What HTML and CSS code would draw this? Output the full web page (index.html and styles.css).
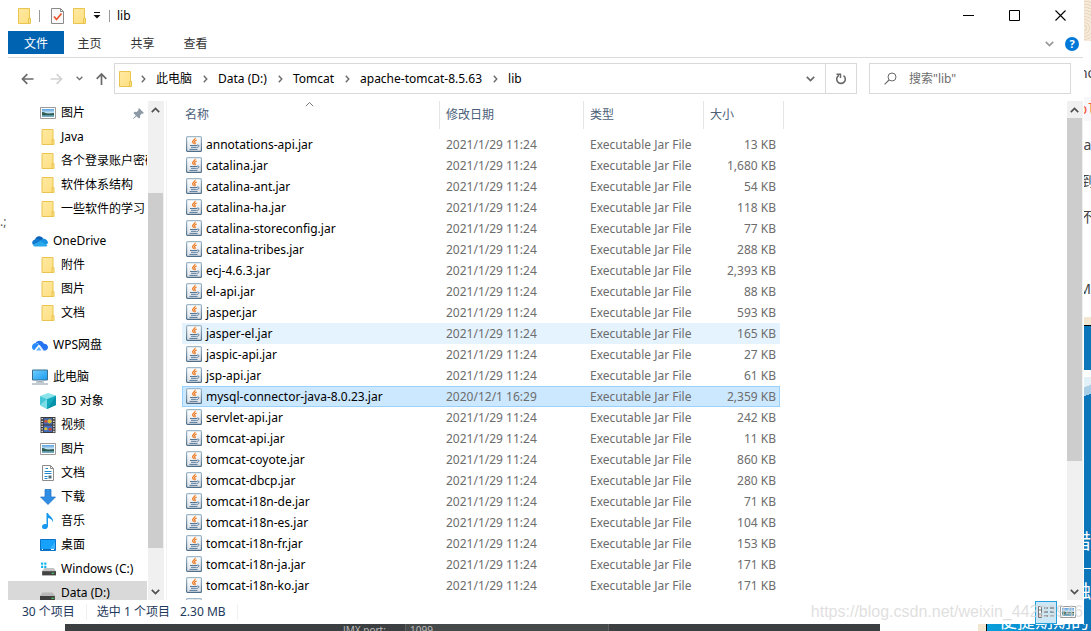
FILE: index.html
```html
<!DOCTYPE html>
<html lang="zh-CN">
<head>
<meta charset="utf-8">
<title>lib</title>
<link rel="stylesheet" href="styles.css">
</head>
<body>
<svg class="defs" aria-hidden="true">
  <defs>
    <linearGradient id="g-folder" x1="0" y1="0" x2="1" y2="1"><stop offset="0" stop-color="#ffe9a3"/><stop offset="1" stop-color="#ffdf80"/></linearGradient>
    <linearGradient id="g-jar" x1="0" y1="0" x2="0" y2="1"><stop offset="0" stop-color="#ffffff"/><stop offset="1" stop-color="#dde1e6"/></linearGradient>
    <linearGradient id="g-edge" x1="0" y1="0" x2="0" y2="1"><stop offset="0" stop-color="#9fb9cb"/><stop offset="1" stop-color="#4d6d88"/></linearGradient>
    <linearGradient id="g-sky" x1="0" y1="0" x2="0" y2="1"><stop offset="0" stop-color="#5aa0e0"/><stop offset=".5" stop-color="#cfe8f8"/><stop offset=".6" stop-color="#3b6e62"/><stop offset="1" stop-color="#7fb6d6"/></linearGradient>
    <linearGradient id="g-screen" x1="0" y1="0" x2="1" y2="1"><stop offset="0" stop-color="#6fd0ff"/><stop offset="1" stop-color="#1a9af0"/></linearGradient>
    <symbol id="folder" viewBox="0 0 13 16"><path d="M.5 .5h11v10h1v5H.5z" fill="url(#g-folder)" stroke="#e9c550"/><path d="M10.500 15V10.500h2" fill="none" stroke="#e9c550"/></symbol>
    <symbol id="jar" viewBox="0 0 16 16"><rect x=".6" y=".6" width="14.800" height="14.800" rx="1" fill="url(#g-jar)" stroke="url(#g-edge)" stroke-width="1.200"/><path d="M9 1.800c1 1.700-3.500 2.700-2.300 4.500.3.600.9 1 1.100 1.500M10.800 4c-2.500.8-2.700 1.700-1.900 2.500.6.700.2 1.200-.4 1.600" fill="none" stroke="#ee7f28" stroke-width="1.300"/><path d="M4 9.500h7M5 11.300h5.500M3.500 13.400h8M11 9.200c3-.8 2.500 2-.3 2.300" fill="none" stroke="#54799b" stroke-width="1"/></symbol>
    <symbol id="picture" viewBox="0 0 16 12"><path d="M.5.5h15v11H.5z" fill="#fff" stroke="#9b9b9b"/><path d="M2 2h12v8H2z" fill="url(#g-sky)"/><path d="M2 5c3 0 4 2 7 2l5-1v2H2z" fill="#2e5f56"/></symbol>
    <symbol id="cloud" viewBox="0 0 16 11"><path d="M3 4A4.500 4.500 0 0 1 11.500 3.500L8 7z" fill="#0a63b8"/><path d="M3.500 3.700A3.600 3.600 0 0 0 1 9.500L10 5.500C7 3 5 3.500 3.500 3.700z" fill="#1379cf"/><path d="M7 5.500 11 3.300c3 0 5 2 5 4.500L12 10z" fill="#1690e0"/><path d="M1 9.500 8.500 5.500l7 4C15 10.600 14 11 13 11H3.500C2.300 11 1.500 10.500 1 9.500z" fill="#28a8ea"/></symbol>
    <symbol id="wps" viewBox="0 0 16 11"><path d="M3 4a5 5 0 0 1 9 .2c2.500 0 4 1.600 4 3.500S14.500 11 13 11h-2L6 4z" fill="#2673f0"/><path d="M3.500 3.500C1 4 0 5.500 0 7.300 0 9 .8 10.300 2.200 10.800L7 5z" fill="#2b8cff"/><path d="M4 11 7 7.500 9.500 11z" fill="#5fb2ff"/><path d="m2.800 10.800 4.500-5.300 4 5.300" fill="none" stroke="#fff" stroke-width=".8"/></symbol>
    <symbol id="pc" viewBox="0 0 16 15"><path d="M.5.5h15v10H.5z" fill="url(#g-screen)" stroke="#3b708f"/><path d="M6 11h4v1.500H6z" fill="#bfc9d2"/><path d="M4 12.500h8M0 14.500h16" stroke="#8797a5"/></symbol>
    <symbol id="cube" viewBox="0 0 16 16"><path d="m0 3 8-3 8 2.500L7 6z" fill="#8be4ec"/><path d="M0 3l7 3v10l-7-4z" fill="#46c6d6"/><path d="M7 6l9-3.500V12l-9 4z" fill="#14aabe"/><path d="M0 12 7 6v10z" fill="#7bdde6"/><path d="m7 16 9-13v9z" fill="#0792aa"/></symbol>
    <symbol id="film" viewBox="0 0 14 15"><path d="M0 0h14v15H0z" fill="#3a3a3a"/><path d="M3 1h8v6H3z" fill="#4a69ae"/><path d="M3 8h8v6H3z" fill="#4470c4"/><path d="M1.500 1v14M12.500 1v14" stroke="#fff" stroke-width="1.200" stroke-dasharray="1.200 1.200"/><circle cx="5" cy="4" r="1.500" fill="#d55332"/><circle cx="8.500" cy="4" r="2" fill="#d9be32"/><circle cx="5" cy="11" r="1.500" fill="#d9be32"/><circle cx="9" cy="11.500" r="1.500" fill="#c84332"/></symbol>
    <symbol id="doc" viewBox="0 0 12 16"><path d="M.5.500h8l3 3v12H.5z" fill="#fff" stroke="#8c8c8c"/><path d="M8.500.500v3h3" fill="none" stroke="#8c8c8c"/><path d="M6 3.500H3.500M2.500 6.500h7M2.500 8.500h7M2.500 11.500h3M2.500 13.500h3" stroke="#2388c9"/><path d="M6.500 10.500h3v3h-3z" fill="#496f7a"/></symbol>
    <symbol id="download" viewBox="0 0 16 16"><path d="M5 .5h6V8h4.500L8 15.500.5 8H5z" fill="#2f8de4" stroke="#1c70c4" stroke-width=".7"/></symbol>
    <symbol id="music" viewBox="0 0 12 16"><path d="M4.500 0H6c.5 3 6 4 5 9.500-.5-2.500-2.500-4-5-4.500v8c0 4-6 4-6 .8 0-2.500 3-3.300 4.500-2.300z" fill="#1698ee"/></symbol>
    <symbol id="desktop" viewBox="0 0 16 12"><path d="M.5.500h15v11H.5z" fill="#16a2fb" stroke="#0b74c8"/><path d="m9 11 6-8v8z" fill="#3cb4ff"/><path d="M1 10.500h14" stroke="#0c68b8"/><path d="M2 10.500h1M11 10.500h3" stroke="#fff"/></symbol>
    <symbol id="drive-c" viewBox="0 0 15 12"><path d="M1 0h2v2H1zM4 0h2v2H4zM1 3h2v2H1zM4 3h2v2H4z" fill="#11b5ee"/><path d="M4 5h9l2 3H2z" fill="#c3c3c3"/><path d="M2 8h13v4H2z" fill="#444"/><path d="M11 10h2" stroke="#49e05d"/></symbol>
    <symbol id="drive" viewBox="0 0 14 8"><path d="M2 1h9l2.500 3H0z" fill="#b8b8b8"/><path d="M0 4h13v4H0z" fill="#3f3f3f"/><path d="M10 6h2" stroke="#49e05d"/></symbol>
    <symbol id="check-doc" viewBox="0 0 13 16"><path d="M.5.500h9l3 3v12H.5z" fill="#fafafa" stroke="#8a8a8a"/><path d="M9.500.500v3h3" fill="none" stroke="#8a8a8a"/><path d="m3 8.500 2.500 3 5-6" fill="none" stroke="#e8552b" stroke-width="1.700"/></symbol>
    <symbol id="down" viewBox="0 0 9 6"><path d="m.8.800 3.700 3.700L8.200.8" fill="none" stroke="currentColor" stroke-width="1.700"/></symbol>
    <symbol id="up" viewBox="0 0 9 6"><path d="m.8 5.200 3.700-3.700 3.700 3.700" fill="none" stroke="currentColor" stroke-width="1.700"/></symbol>
    <symbol id="sort" viewBox="0 0 9 6"><path d="m.8 5.200 3.700-3.700 3.700 3.700" fill="none" stroke="currentColor"/></symbol>
    <symbol id="right" viewBox="0 0 5 8"><path d="m.8.800 3 3.200-3 3.200" fill="none" stroke="currentColor" stroke-width="1.400"/></symbol>
    <symbol id="arrow" viewBox="0 0 13 12"><path d="M12.500 6H1.500M6.300 1.200 1.500 6l4.800 4.800" fill="none" stroke="currentColor" stroke-width="1.700"/></symbol>
    <symbol id="pin" viewBox="0 0 11 11"><path d="m6 0 5 5-1.300.8-.8-.3L7 7.400l.2 2L6 10.600 3.600 8.200.4 11 0 10.600l2.800-3.200L.4 5l1.200-1.200 2 .2 2-2-.3-.8z" fill="#8d9aa6"/></symbol>
  </defs>
</svg>

<div class="desktop">
  <div class="gutter"><span>.;</span></div>

  <main class="window">
    <header class="titlebar">
      <div class="quick">
        <svg class="i-folder"><use href="#folder"/></svg>
        <span class="bar"></span>
        <button class="plain" aria-label="属性"><svg class="i-folder"><use href="#check-doc"/></svg></button>
        <button class="plain" aria-label="新建文件夹"><svg class="i-folder"><use href="#folder"/></svg></button>
        <button class="plain more" aria-label="自定义快速访问工具栏"><svg class="i-menu" viewBox="0 0 8 7"><path d="M1 .5h6" stroke="#111"/><path d="M.5 3h7L4 6.500z" fill="#111"/></svg></button>
        <span class="bar"></span>
        <h1>lib</h1>
      </div>
      <div class="controls">
        <button aria-label="最小化"><svg viewBox="0 0 11 11"><path d="M0 5.500h11" stroke="#000"/></svg></button>
        <button aria-label="最大化"><svg viewBox="0 0 11 11"><path d="M.5.500h10v10H.5z" fill="none" stroke="#000"/></svg></button>
        <button aria-label="关闭"><svg viewBox="0 0 11 11"><path d="m.5.500 10 10m0-10-10 10" stroke="#000" stroke-width="1.100"/></svg></button>
      </div>
    </header>

    <nav class="ribbon">
      <button class="tab active">文件</button>
      <button class="tab">主页</button>
      <button class="tab">共享</button>
      <button class="tab">查看</button>
      <div class="ribbon-end">
        <button class="plain light" aria-label="展开功能区"><svg class="i-chev"><use href="#down"/></svg></button>
        <button class="help" aria-label="帮助">?</button>
      </div>
    </nav>

    <div class="address-row">
      <div class="nav-buttons">
        <button class="plain" aria-label="后退"><svg class="i-arrow"><use href="#arrow"/></svg></button>
        <button class="plain off" aria-label="前进"><svg class="i-arrow flip"><use href="#arrow"/></svg></button>
        <button class="plain" aria-label="最近浏览的位置"><svg class="i-small"><use href="#down"/></svg></button>
        <button class="plain" aria-label="上移"><svg class="i-arrow turn"><use href="#arrow"/></svg></button>
      </div>
      <div class="address">
        <div class="crumbs">
          <svg class="i-folder"><use href="#folder"/></svg>
          <svg class="i-right"><use href="#right"/></svg>
          <a href="#">此电脑</a>
          <svg class="i-right"><use href="#right"/></svg>
          <a href="#">Data (D:)</a>
          <svg class="i-right"><use href="#right"/></svg>
          <a href="#">Tomcat</a>
          <svg class="i-right"><use href="#right"/></svg>
          <a href="#">apache-tomcat-8.5.63</a>
          <svg class="i-right"><use href="#right"/></svg>
          <a href="#">lib</a>
        </div>
        <button class="history" aria-label="以前的位置"><svg class="i-chev"><use href="#down"/></svg></button>
        <button class="refresh" aria-label="刷新"><svg viewBox="0 0 12 12"><path d="M4 2.300A4.300 4.300 0 1 0 8.500 2.600" fill="none" stroke="#6a6a6a" stroke-width="1.600"/><path d="M1.500 1.200h4V5" fill="none" stroke="#6a6a6a" stroke-width="1.400"/></svg></button>
      </div>
      <label class="search">
        <svg viewBox="0 0 13 13"><circle cx="8" cy="5" r="4" fill="none" stroke="#6b6b6b"/><path d="M5 8 .6 12.400" stroke="#6b6b6b" stroke-width="1.100"/></svg>
        <input type="text" placeholder='搜索"lib"' aria-label="搜索">
      </label>
    </div>

    <div class="body">
      <aside class="tree">
        <ul>
          <li class="child"><svg class="i-wide"><use href="#picture"/></svg><span>图片</span><svg class="i-pin"><use href="#pin"/></svg></li>
          <li class="child"><svg class="i-wide"><use href="#folder"/></svg><span>Java</span></li>
          <li class="child"><svg class="i-wide"><use href="#folder"/></svg><span>各个登录账户密码</span></li>
          <li class="child"><svg class="i-wide"><use href="#folder"/></svg><span>软件体系结构</span></li>
          <li class="child"><svg class="i-wide"><use href="#folder"/></svg><span>一些软件的学习</span></li>
        </ul>
        <ul>
          <li><svg class="i-wide"><use href="#cloud"/></svg><span>OneDrive</span></li>
          <li class="child"><svg class="i-wide"><use href="#folder"/></svg><span>附件</span></li>
          <li class="child"><svg class="i-wide"><use href="#folder"/></svg><span>图片</span></li>
          <li class="child"><svg class="i-wide"><use href="#folder"/></svg><span>文档</span></li>
        </ul>
        <ul>
          <li><svg class="i-wide"><use href="#wps"/></svg><span>WPS网盘</span></li>
        </ul>
        <ul>
          <li><svg class="i-wide"><use href="#pc"/></svg><span>此电脑</span></li>
          <li class="child"><svg class="i-wide"><use href="#cube"/></svg><span>3D 对象</span></li>
          <li class="child"><svg class="i-wide"><use href="#film"/></svg><span>视频</span></li>
          <li class="child"><svg class="i-wide"><use href="#picture"/></svg><span>图片</span></li>
          <li class="child"><svg class="i-wide"><use href="#doc"/></svg><span>文档</span></li>
          <li class="child"><svg class="i-wide"><use href="#download"/></svg><span>下载</span></li>
          <li class="child"><svg class="i-wide"><use href="#music"/></svg><span>音乐</span></li>
          <li class="child"><svg class="i-wide"><use href="#desktop"/></svg><span>桌面</span></li>
          <li class="child"><svg class="i-wide"><use href="#drive-c"/></svg><span>Windows (C:)</span></li>
          <li class="child current"><svg class="i-wide i-drive"><use href="#drive"/></svg><span>Data (D:)</span></li>
        </ul>
      </aside>
      <div class="scroll tree-scroll">
        <button aria-label="向上滚动"><svg class="i-chev"><use href="#up"/></svg></button>
        <div class="track"><div class="before"></div><div class="thumb"></div><div class="after"></div></div>
        <button aria-label="向下滚动"><svg class="i-chev"><use href="#down"/></svg></button>
      </div>

      <section class="files">
        <table>
          <thead>
            <tr><th><svg class="i-sort"><use href="#sort"/></svg>名称</th><th>修改日期</th><th>类型</th><th>大小</th></tr>
          </thead>
          <tbody>
            <tr><td><svg><use href="#jar"/></svg>annotations-api.jar</td><td>2021/1/29 11:24</td><td>Executable Jar File</td><td>13 KB</td></tr>
            <tr><td><svg><use href="#jar"/></svg>catalina.jar</td><td>2021/1/29 11:24</td><td>Executable Jar File</td><td>1,680 KB</td></tr>
            <tr><td><svg><use href="#jar"/></svg>catalina-ant.jar</td><td>2021/1/29 11:24</td><td>Executable Jar File</td><td>54 KB</td></tr>
            <tr><td><svg><use href="#jar"/></svg>catalina-ha.jar</td><td>2021/1/29 11:24</td><td>Executable Jar File</td><td>118 KB</td></tr>
            <tr><td><svg><use href="#jar"/></svg>catalina-storeconfig.jar</td><td>2021/1/29 11:24</td><td>Executable Jar File</td><td>77 KB</td></tr>
            <tr><td><svg><use href="#jar"/></svg>catalina-tribes.jar</td><td>2021/1/29 11:24</td><td>Executable Jar File</td><td>288 KB</td></tr>
            <tr><td><svg><use href="#jar"/></svg>ecj-4.6.3.jar</td><td>2021/1/29 11:24</td><td>Executable Jar File</td><td>2,393 KB</td></tr>
            <tr><td><svg><use href="#jar"/></svg>el-api.jar</td><td>2021/1/29 11:24</td><td>Executable Jar File</td><td>88 KB</td></tr>
            <tr><td><svg><use href="#jar"/></svg>jasper.jar</td><td>2021/1/29 11:24</td><td>Executable Jar File</td><td>593 KB</td></tr>
            <tr class="hover"><td><svg><use href="#jar"/></svg>jasper-el.jar</td><td>2021/1/29 11:24</td><td>Executable Jar File</td><td>165 KB</td></tr>
            <tr><td><svg><use href="#jar"/></svg>jaspic-api.jar</td><td>2021/1/29 11:24</td><td>Executable Jar File</td><td>27 KB</td></tr>
            <tr><td><svg><use href="#jar"/></svg>jsp-api.jar</td><td>2021/1/29 11:24</td><td>Executable Jar File</td><td>61 KB</td></tr>
            <tr class="selected"><td><svg><use href="#jar"/></svg>mysql-connector-java-8.0.23.jar</td><td>2020/12/1 16:29</td><td>Executable Jar File</td><td>2,359 KB</td></tr>
            <tr><td><svg><use href="#jar"/></svg>servlet-api.jar</td><td>2021/1/29 11:24</td><td>Executable Jar File</td><td>242 KB</td></tr>
            <tr><td><svg><use href="#jar"/></svg>tomcat-api.jar</td><td>2021/1/29 11:24</td><td>Executable Jar File</td><td>11 KB</td></tr>
            <tr><td><svg><use href="#jar"/></svg>tomcat-coyote.jar</td><td>2021/1/29 11:24</td><td>Executable Jar File</td><td>860 KB</td></tr>
            <tr><td><svg><use href="#jar"/></svg>tomcat-dbcp.jar</td><td>2021/1/29 11:24</td><td>Executable Jar File</td><td>280 KB</td></tr>
            <tr><td><svg><use href="#jar"/></svg>tomcat-i18n-de.jar</td><td>2021/1/29 11:24</td><td>Executable Jar File</td><td>71 KB</td></tr>
            <tr><td><svg><use href="#jar"/></svg>tomcat-i18n-es.jar</td><td>2021/1/29 11:24</td><td>Executable Jar File</td><td>104 KB</td></tr>
            <tr><td><svg><use href="#jar"/></svg>tomcat-i18n-fr.jar</td><td>2021/1/29 11:24</td><td>Executable Jar File</td><td>153 KB</td></tr>
            <tr><td><svg><use href="#jar"/></svg>tomcat-i18n-ja.jar</td><td>2021/1/29 11:24</td><td>Executable Jar File</td><td>171 KB</td></tr>
            <tr><td><svg><use href="#jar"/></svg>tomcat-i18n-ko.jar</td><td>2021/1/29 11:24</td><td>Executable Jar File</td><td>171 KB</td></tr>
            <tr><td><svg><use href="#jar"/></svg></td><td></td><td></td><td></td></tr>
          </tbody>
        </table>
      </section>
      <div class="scroll file-scroll">
        <button aria-label="向上滚动"><svg class="i-chev"><use href="#up"/></svg></button>
        <div class="track"><div class="thumb"></div><div class="after"></div></div>
        <button aria-label="向下滚动"><svg class="i-chev"><use href="#down"/></svg></button>
      </div>
    </div>

    <footer class="status">
      <span class="count">30 个项目</span>
      <span class="picked">选中 1 个项目</span>
      <span class="size">2.30 MB</span>
      <div class="views">
        <button class="on" aria-label="详细信息"><svg viewBox="0 0 16 12"><path d="M.5.500h3v11h-3zM0 4h4M0 8h4" fill="#fff" stroke="#777"/><path d="M6 2h4M12 2h4M6 6h4M12 6h4M6 10h4M12 10h4" stroke="#555"/><path d="M1.500 10h1" stroke="#d33"/></svg></button>
        <button aria-label="大图标"><svg viewBox="0 0 16 12"><use href="#picture"/></svg></button>
      </div>
    </footer>
  </main>

  <div class="side">
    <div class="pattern"></div>
    <div class="line code-a"><span>no</span></div>
    <div class="line code-b"><span>ol</span></div>
    <div class="line"><span>a</span></div>
    <div class="line"><span>到</span></div>
    <div class="line"><span>不</span></div>
    <div class="line tall"><span>M</span></div>
    <div class="sand"></div>
    <div class="tile"></div>
    <div class="peak"></div>
    <div class="banner"><span>错</span></div>
    <div class="banner low"><span>触</span></div>
  </div>

  <div class="under">
    <div class="ide"><span class="ide-label">JMX port:</span><span class="ide-field">1099</span></div>
    <div class="ad"><span>便捷期期的</span></div>
  </div>

  <div class="watermark">https://blog.csdn.net/weixin_44223946</div>
</div>
</body>
</html>
```

FILE: styles.css
```css
* { box-sizing: border-box; }

body {
  margin: 0;
  font: 12px/20px "Noto Sans", "Noto Sans CJK SC", sans-serif;
  color: #000;
  background: #fff;
}

button, input { font: inherit; color: inherit; border: 0; padding: 0; background: none; }
a { color: inherit; text-decoration: none; }
ul { list-style: none; margin: 0; padding: 0; }
svg { display: block; flex: none; }
.defs { position: absolute; width: 0; height: 0; }

.desktop {
  position: relative;
  display: grid;
  grid-template-columns: 8px minmax(0, 1fr) 7px;
  grid-template-rows: minmax(0, 1fr) 7px;
  height: 100vh;
  overflow: hidden;
}

.gutter { display: flex; padding-top: 212px; overflow: hidden; color: #555; }

.window { display: flex; flex-direction: column; min-width: 0; min-height: 0; margin-right: 1px; background: #fff; }

/* icons */
.i-folder { width: 13px; height: 16px; }
.i-menu { width: 8px; height: 7px; }
.i-chev { width: 9px; height: 6px; }
.i-small { width: 7px; height: 5px; }
.i-right { width: 5px; height: 8px; color: #6a6a6a; }
.i-arrow { width: 13px; height: 12px; }
.i-wide { width: 16px; height: 16px; }
.i-pin { width: 11px; height: 11px; }
.flip { transform: rotate(180deg); }
.turn { transform: rotate(90deg); }
.plain { display: flex; align-items: center; justify-content: center; color: #6a6a6a; }
.light { color: #999; }
.off { color: #d2d2d2; }

/* title bar */
.titlebar { display: flex; justify-content: space-between; height: 31px; }
.quick { display: flex; align-items: center; gap: 9px; padding-left: 10px; }
.quick .bar { width: 1px; height: 12px; background: #999; margin: 0 -1px; }
.quick .bar + .plain { margin-left: 3px; }
.quick .more { margin-left: -2px; }
.quick h1 { margin: 0 0 0 -1px; font-size: 12px; font-weight: 400; }
.controls { display: flex; }
.controls button { display: flex; align-items: center; justify-content: center; width: 46px; }
.controls svg { width: 11px; height: 11px; }

/* ribbon */
.ribbon { display: flex; height: 27px; border-bottom: 1px solid #dadbdc; padding-bottom: 3px; }
.tab { width: 53px; padding-top: 2px; color: #333; }
.tab.active { width: 56px; margin-right: -1px; background: #0063b1; color: #fff; }
.ribbon-end { display: flex; align-items: center; gap: 11px; margin-left: auto; padding: 2px 4px 0 0; }
.help { width: 14px; height: 14px; line-height: 14px; border-radius: 50%; background: #0078d7; color: #fff; font-size: 11px; font-weight: 700; }

/* address row */
.address-row { display: flex; align-items: center; height: 43px; padding: 0 12px 2px 13px; }
.nav-buttons { display: flex; align-items: center; width: 93px; gap: 12px; }
.nav-buttons .plain:first-child { margin-right: 4px; }
.nav-buttons .plain { min-width: 8px; }
.address { display: flex; flex: 1; height: 31px; border: 1px solid #d9d9d9; }
.crumbs { display: flex; flex: 1; align-items: center; gap: 10px; padding-left: 4px; }
.crumbs a { margin-right: 1px; white-space: nowrap; }
.crumbs .i-folder { margin-right: -1px; }
.history { display: flex; align-items: center; justify-content: center; width: 29px; color: #6a6a6a; }
.refresh { display: flex; align-items: center; justify-content: center; width: 31px; border-left: 1px solid #d9d9d9; }
.refresh svg { width: 12px; height: 12px; }
.search { display: flex; align-items: center; gap: 12px; width: 202px; height: 31px; margin-left: 12px; padding-left: 14px; border: 1px solid #d9d9d9; }
.search svg { width: 13px; height: 13px; }
.search input { flex: 1; min-width: 0; outline: 0; }
.search input::placeholder { color: #6d6d6d; opacity: 1; }

/* body */
.body { display: flex; flex: 1; min-height: 0; }

.tree { width: 139px; overflow: hidden; }
.tree ul + ul { margin-top: 8px; }
.tree li { display: flex; align-items: center; gap: 5px; height: 24px; padding-left: 24px; white-space: nowrap; }
.tree li.child { padding-left: 32px; }
.tree li.current { background: #d9d9d9; }
.i-drive { margin-top: 6px; }
.tree .i-pin { margin-left: auto; margin-right: 3px; }

.scroll { display: flex; flex-direction: column; width: 16px; background: #f0f0f0; }
.scroll button { display: flex; align-items: center; justify-content: center; height: 17px; padding-right: 1px; color: #505050; }
.track { display: flex; flex-direction: column; flex: 1; padding-right: 1px; }
.thumb { background: #cdcdcd; }
.tree-scroll { margin-left: 1px; }
.tree-scroll .before { flex: 75; }
.tree-scroll .thumb { flex: 355; }
.tree-scroll .after { flex: 35; }
.file-scroll .thumb { flex: 343; }
.file-scroll .after { flex: 122; }

.files { flex: 1; min-width: 0; margin-left: 2px; padding-left: 15px; border-left: 1px solid #f2f2f2; overflow: hidden; }
table { display: block; }
thead, tbody { display: block; }
tr { display: grid; grid-template-columns: 258px 144px 120px 76px; width: 598px; height: 21px; }
thead tr { grid-template-columns: 258px 144px 120px 80px; width: 602px; height: 28px; margin-bottom: 5px; }
th { position: relative; padding: 4px 3px 0; border-right: 1px solid #e5e5e5; font-weight: 400; text-align: left; color: #4c607a; }
th + th { padding-left: 6px; }
.i-sort { position: absolute; top: 0; left: 50%; width: 9px; height: 6px; margin-left: -6px; color: #777; }
td { padding: 0 4px 0 6px; line-height: 21px; color: #6d6d6d; white-space: nowrap; }
td:first-child { display: flex; align-items: flex-start; gap: 4px; padding-left: 4px; color: #000; }
td:last-child { text-align: right; }
td svg { width: 16px; height: 16px; margin-top: 2px; }
.hover { background: #e5f3ff; }
.selected { background: #cce8ff; outline: 1px solid #99d1ff; outline-offset: -1px; }

/* status bar */
.status { display: flex; align-items: center; height: 24px; padding-left: 14px; color: #1e395b; white-space: nowrap; }
.status .count { padding-right: 11px; border-right: 1px solid #f0f0f0; line-height: 16px; }
.status .picked { padding: 0 10px; }
.status .size { padding-right: 11px; border-right: 1px solid #f0f0f0; line-height: 16px; }
.views { display: flex; margin-left: auto; padding-right: 4px; }
.views button { display: flex; align-items: center; justify-content: center; width: 22px; height: 23px; }
.views .on { background: #cce8f6; border: 1px solid #26a0da; }
.views svg { width: 16px; height: 12px; }

/* page visible beside the window */
.side { display: flex; flex-direction: column; min-height: 0; overflow: hidden; background: #fff; }
.side > div { flex: none; display: flex; align-items: center; justify-content: center; overflow: hidden; }
.side .pattern { height: 41px; margin-bottom: 20px; background: repeating-radial-gradient(circle at 0 28px, #f5ead9 0 2px, #e9d9bf 2px 3px); }
.side .line { height: 36px; font-size: 14px; color: #444; }
.side .code-a { height: 24px; margin-bottom: 12px; }
.side .code-b { height: 24px; margin-bottom: 6px; font-family: "DejaVu Sans Mono", monospace; color: #f9573a; background: #f7f7f9; }
.side .tall { height: 72px; margin-top: 18px; justify-content: flex-end; }
.side .sand { height: 9px; margin-top: -8px; background: #f3e6d0; border-bottom: 1px solid #000; }
.side .tile { height: 44px; background: #0d76bb; }
.side .peak { height: 30px; border-top: 7px solid #fff; background: linear-gradient(160deg, #e2f0f8 0 40%, #a9cfe6 41% 75%, #0d76bb 76%); }
.side .banner { flex: 1; align-items: flex-end; justify-content: flex-end; padding-bottom: 16px; background: #0d76bb; border-bottom: 1px solid #fff; color: #fff; font-size: 20px; }
.side .low { flex: none; height: 55px; padding-bottom: 23px; border: 0; font-size: 18px; }

.under { grid-column: 1 / -1; display: flex; justify-content: space-between; padding-left: 65px; overflow: hidden; }
.ide { display: flex; width: 815px; padding-left: 278px; background: #3c3f41; color: #bbb; font-size: 10px; line-height: 12px; }
.ide-label { width: 62px; }
.ide-field { width: 204px; padding-left: 4px; background: #45494a; border: solid #5e6060; border-width: 0 1px; }
.ad { display: flex; align-items: flex-end; justify-content: flex-end; width: 113px; height: 7px; padding-right: 2px; border-left: 8px solid #f3e6d0; background: linear-gradient(90deg, #000 1px, #0a9fdc 1px, #0d76bb); color: #fff; font-size: 18px; line-height: 20px; white-space: nowrap; }

.watermark {
  position: absolute;
  right: 8px;
  bottom: 8px;
  font: 16px/22px "Liberation Sans", sans-serif;
  color: rgba(215, 215, 215, .8);
  pointer-events: none;
}
```
